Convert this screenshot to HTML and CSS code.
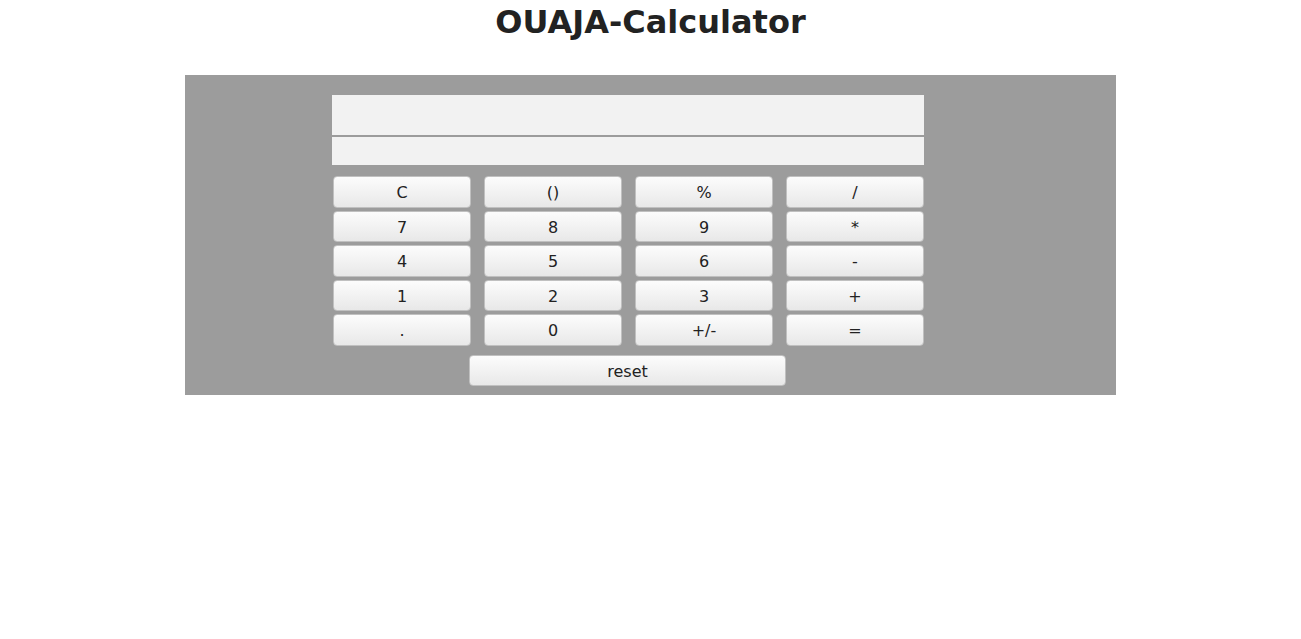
FILE: index.html
```html
<!DOCTYPE html>
<html>
<head>
<meta charset="utf-8">
<title>OUAJA-Calculator</title>
<link rel="stylesheet" href="styles.css">
</head>
<body>
<h1 class="title">OUAJA-Calculator</h1>
<div class="panel">
  <div class="calc">
    <div class="display">
      <div class="screen-top"></div>
      <div class="screen-bottom"></div>
    </div>
    <div class="keys">
      <button class="key">C</button>
      <button class="key">()</button>
      <button class="key">%</button>
      <button class="key">/</button>
      <button class="key">7</button>
      <button class="key">8</button>
      <button class="key">9</button>
      <button class="key">*</button>
      <button class="key">4</button>
      <button class="key">5</button>
      <button class="key">6</button>
      <button class="key">-</button>
      <button class="key">1</button>
      <button class="key">2</button>
      <button class="key">3</button>
      <button class="key">+</button>
      <button class="key">.</button>
      <button class="key">0</button>
      <button class="key">+/-</button>
      <button class="key">=</button>
    </div>
    <div class="reset-row">
      <button class="key reset">reset</button>
    </div>
  </div>
</div>
</body>
</html>
```
FILE: styles.css
```css
html, body {
  margin: 0;
  padding: 0;
  background: #ffffff;
  font-family: "DejaVu Sans", sans-serif;
}
.title {
  margin: 3px 0 0;
  text-align: center;
  font-size: 32px;
  font-weight: bold;
  color: #222222;
}
.panel {
  width: 931px;
  height: 320px;
  box-sizing: border-box;
  margin: 34px auto 0;
  background: #9c9c9c;
  padding: 20px 0 0 147px;
}
.calc {
  width: 592px;
}
.display {
  display: flex;
  flex-direction: column;
  gap: 2px;
}
.screen-top {
  height: 40px;
  background: #f2f2f2;
}
.screen-bottom {
  height: 28px;
  background: #f2f2f2;
}
.keys {
  margin-top: 11px;
  padding-left: 1px;
  display: grid;
  grid-template-columns: repeat(4, 138px);
  column-gap: 13px;
  row-gap: 3px;
}
.key {
  height: 31.5px;
  box-sizing: border-box;
  border: 1px solid #c0c0c0;
  border-radius: 4px;
  background: linear-gradient(#fcfcfc, #e8e8e8);
  font-family: "DejaVu Sans", sans-serif;
  font-size: 16px;
  color: #222222;
  padding: 2px 0 0;
  margin: 0;
}
.reset-row {
  margin-top: 9px;
  display: flex;
  padding-left: 137px;
}
.reset {
  width: 317px;
  height: 31px;
}
```
